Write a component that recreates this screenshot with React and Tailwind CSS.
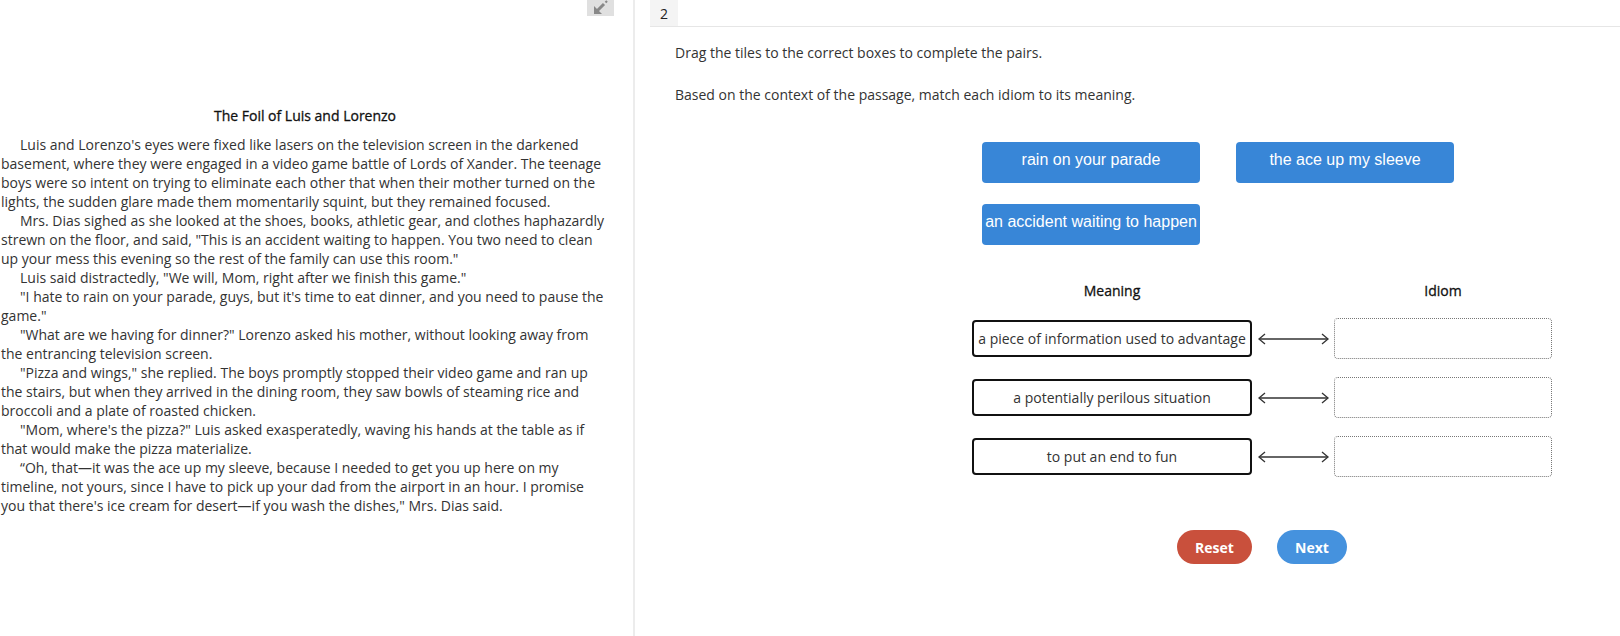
import React from 'react';

const font = { fontFamily: '"Open Sans", "Liberation Sans", sans-serif' };

const paragraphs = [
  [
    "Luis and Lorenzo's eyes were fixed like lasers on the television screen in the darkened",
    'basement, where they were engaged in a video game battle of Lords of Xander. The teenage',
    'boys were so intent on trying to eliminate each other that when their mother turned on the',
    'lights, the sudden glare made them momentarily squint, but they remained focused.',
  ],
  [
    'Mrs. Dias sighed as she looked at the shoes, books, athletic gear, and clothes haphazardly',
    'strewn on the floor, and said, "This is an accident waiting to happen. You two need to clean',
    'up your mess this evening so the rest of the family can use this room."',
  ],
  ['Luis said distractedly, "We will, Mom, right after we finish this game."'],
  [
    '"I hate to rain on your parade, guys, but it\'s time to eat dinner, and you need to pause the',
    'game."',
  ],
  [
    '"What are we having for dinner?" Lorenzo asked his mother, without looking away from',
    'the entrancing television screen.',
  ],
  [
    '"Pizza and wings," she replied. The boys promptly stopped their video game and ran up',
    'the stairs, but when they arrived in the dining room, they saw bowls of steaming rice and',
    'broccoli and a plate of roasted chicken.',
  ],
  [
    '"Mom, where\'s the pizza?" Luis asked exasperatedly, waving his hands at the table as if',
    'that would make the pizza materialize.',
  ],
  [
    '\u201COh, that\u2014it was the ace up my sleeve, because I needed to get you up here on my',
    'timeline, not yours, since I have to pick up your dad from the airport in an hour. I promise',
    'you that there\'s ice cream for desert\u2014if you wash the dishes," Mrs. Dias said.',
  ],
];

const tiles = ['rain on your parade', 'the ace up my sleeve', 'an accident waiting to happen'];
const meanings = ['a piece of information used to advantage', 'a potentially perilous situation', 'to put an end to fun'];

const DoubleArrow = () => (
  <svg width="73" height="14" viewBox="0 0 73 14" fill="none" stroke="#333" strokeWidth="1.3">
    <path d="M2 7 H71" />
    <path d="M8 2 L2 7 L8 12" />
    <path d="M65 2 L71 7 L65 12" />
  </svg>
);

const App = () => {
  return (
    <div className="flex w-[1620px] h-[636px] bg-white text-[#333] overflow-hidden" style={font}>
      {/* passage */}
      <div className="w-[635px] shrink-0 border-r-2 border-[#ececec] flex flex-col">
        <div className="flex justify-end pr-[19px]">
          <div className="w-[27px] h-[16px] bg-[#e0e0e0]">
            <svg width="27" height="16" viewBox="0 0 27 16">
              <path d="M7 14 L7 6 L15 14 Z" fill="#888" />
              <path d="M10 11 L17 4" stroke="#888" strokeWidth="3" />
              <path d="M18.5 2.5 L20 1" stroke="#888" strokeWidth="2.2" />
            </svg>
          </div>
        </div>
        <h2 className="mt-[90px] w-[610px] text-center text-[14px] leading-[19px] text-[#111] [-webkit-text-stroke:0.3px_#111]">
          The Foil of Luis and Lorenzo
        </h2>
        <div className="mt-[10px] pl-[1px] text-[14px] leading-[19px]">
          {paragraphs.map((lines, i) => (
            <div key={i}>
              {lines.map((line, j) => (
                <div key={j} className={`whitespace-nowrap ${j === 0 ? 'pl-[19px]' : ''}`}>
                  {line}
                </div>
              ))}
            </div>
          ))}
        </div>
      </div>

      {/* question */}
      <div className="flex-1 flex flex-col">
        <div className="ml-[15px] h-[27px] border-b border-[#e6e6e6] flex">
          <div className="w-[28px] h-[26px] bg-[#f4f4f4] flex items-center justify-center text-[14px] text-[#222]">
            2
          </div>
        </div>

        <div className="pl-[40px] text-[14px] leading-5">
          <p className="mt-[16px]">Drag the tiles to the correct boxes to complete the pairs.</p>
          <p className="mt-[22px]">Based on the context of the passage, match each idiom to its meaning.</p>
        </div>

        <div
          className="ml-[347px] mt-[37px] grid grid-cols-[218px_218px] gap-x-[36px] gap-y-[21px]"
          style={{ fontFamily: '"Liberation Sans", Arial, sans-serif' }}
        >
          {tiles.map((t) => (
            <div
              key={t}
              className="h-[41px] pb-[5px] rounded-[4px] bg-[#3886d7] text-white text-[16px] flex items-center justify-center whitespace-nowrap"
            >
              {t}
            </div>
          ))}
        </div>

        <div className="ml-[337px] mt-[36px] flex text-[14px] leading-5 text-[#111] [-webkit-text-stroke:0.3px_#111]">
          <div className="w-[280px] text-center">Meaning</div>
          <div className="w-[82px]" />
          <div className="w-[218px] text-center">Idiom</div>
        </div>

        <div className="ml-[337px] mt-[17px] flex flex-col gap-[18px]">
          {meanings.map((m) => (
            <div key={m} className="flex items-center h-[41px]">
              <div className="w-[280px] h-[37px] border-2 border-[#111] rounded-[4px] flex items-center justify-center text-[14px] whitespace-nowrap">
                {m}
              </div>
              <div className="w-[82px] flex justify-center">
                <DoubleArrow />
              </div>
              <div className="w-[218px] h-[41px] border border-dotted border-[#777] rounded-[4px]" />
            </div>
          ))}
        </div>

        <div className="ml-[542px] mt-[53px] flex gap-[25px] text-[14px] font-bold text-white">
          <button className="w-[75px] h-[34px] rounded-full bg-[#c9503c]">Reset</button>
          <button className="w-[70px] h-[34px] rounded-full bg-[#4592de]">Next</button>
        </div>
      </div>
    </div>
  );
};

export default App;
